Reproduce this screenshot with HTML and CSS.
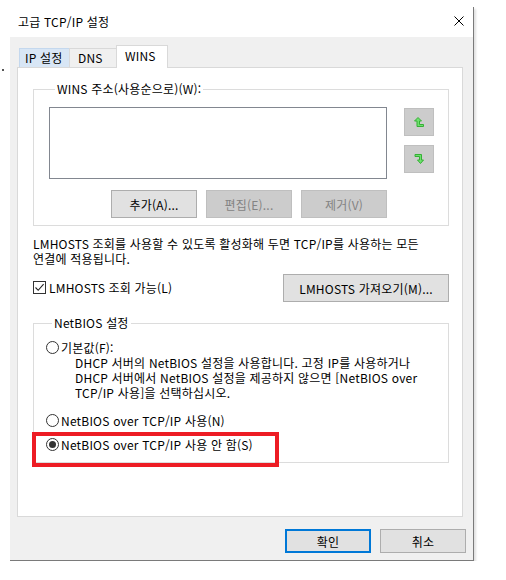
FILE: index.html
```html
<!DOCTYPE html>
<html lang="ko">
<head>
<meta charset="utf-8">
<title>고급 TCP/IP 설정</title>
<link rel="stylesheet" href="styles.css">
</head>
<body>
<div class="speck"></div>
<div class="dialog">
  <div class="titlebar">
    <span class="title">고급 TCP/IP 설정</span>
    <svg class="close" width="10" height="10" viewBox="0 0 10 10"><path d="M0.5 0.5 L9.5 9.5 M9.5 0.5 L0.5 9.5" stroke="#000" stroke-width="1" fill="none"/></svg>
  </div>
  <div class="body">
    <div class="tabs">
      <div class="tab tab-ip">IP 설정</div>
      <div class="tab tab-dns">DNS</div>
      <div class="tab tab-wins active">WINS</div>
    </div>
    <div class="panel">
      <fieldset class="group wins-group">
        <legend>WINS 주소(사용순으로)(W):</legend>
        <div class="list-row">
          <div class="listbox"></div>
          <div class="order-btns">
            <div class="btn-sq">
              <svg width="11" height="11" viewBox="0 0 11 11"><path d="M4 0.5 L7.5 4 L5.5 4 L5.5 7.5 L9.5 7.5 L9.5 9.5 L3 9.5 L3 4 L0.5 4 Z" fill="#6ee06e" stroke="#35b035" stroke-width="1" stroke-linejoin="miter"/></svg>
            </div>
            <div class="btn-sq">
              <svg width="11" height="11" viewBox="0 0 11 11"><path d="M1 0.5 L7.5 0.5 L7.5 6 L9.5 6 L6.5 9.5 L3.5 6 L5.5 6 L5.5 2.5 L1 2.5 Z" fill="#6ee06e" stroke="#35b035" stroke-width="1" stroke-linejoin="miter"/></svg>
            </div>
          </div>
        </div>
        <div class="btn-row">
          <div class="btn">추가(A)...</div>
          <div class="btn disabled">편집(E)...</div>
          <div class="btn disabled">제거(V)</div>
        </div>
      </fieldset>
      <p class="info">LMHOSTS 조회를 사용할 수 있도록 활성화해 두면 TCP/IP를 사용하는 모든<br>연결에 적용됩니다.</p>
      <div class="lm-row">
        <label class="check-line">
          <span class="checkbox">
            <svg width="11" height="11" viewBox="0 0 11 11"><path d="M1.5 5.5 L4.2 8.3 L9.6 2.2" stroke="#222" stroke-width="1.1" fill="none"/></svg>
          </span>
          <span>LMHOSTS 조회 가능(L)</span>
        </label>
        <div class="btn btn-wide">LMHOSTS 가져오기(M)...</div>
      </div>
      <fieldset class="group netbios-group">
        <legend>NetBIOS 설정</legend>
        <div class="radio-line">
          <span class="radio"></span><span>기본값(F):</span>
        </div>
        <p class="desc">DHCP 서버의 NetBIOS 설정을 사용합니다. 고정 IP를 사용하거나<br>DHCP 서버에서 NetBIOS 설정을 제공하지 않으면 [NetBIOS over<br>TCP/IP 사용]을 선택하십시오.</p>
        <div class="radio-line r2">
          <span class="radio"></span><span>NetBIOS over TCP/IP 사용(N)</span>
        </div>
        <div class="radio-line r3">
          <span class="radio checked"></span><span>NetBIOS over TCP/IP 사용 안 함(S)</span>
          <div class="highlight"></div>
        </div>
      </fieldset>
    </div>
    <div class="footer">
      <div class="btn btn-ok">확인</div>
      <div class="btn">취소</div>
    </div>
  </div>
</div>
</body>
</html>
```

FILE: styles.css
```css
* { box-sizing: border-box; }
html, body { margin: 0; padding: 0; background: #fff; }
body {
  font-family: "Noto Sans CJK KR", "Noto Sans", sans-serif;
  font-size: 12px;
  line-height: 15px;
  letter-spacing: 0.2px;
  color: #000;
  position: relative;
}
.speck {
  position: absolute; left: 2px; top: 69px; width: 2px; height: 2px; background: #555;
}
.dialog {
  margin: 7px 0 0 10px;
  width: 464px;
  border-right: 1px solid #7a7a7a;
  border-bottom: 1px solid #7a7a7a;
  box-shadow: 2px 2px 2px rgba(0,0,0,0.12);
}
.titlebar {
  height: 30px;
  background: #fff;
  display: flex;
  align-items: center;
  justify-content: space-between;
  padding: 0 9px 0 8px;
}
.title { line-height: 15px; margin-top: -1px; }
.close { display: block; margin-top: -2px; }
.body {
  background: #f0f0f0;
  padding: 8px 0 7px 7px;
}
.tabs {
  display: flex;
  align-items: flex-end;
  height: 22px;
  padding-left: 2px;
  position: relative;
  z-index: 1;
}
.tab {
  height: 19px;
  line-height: 17px;
  border: 1px solid #d9d9d9;
  border-bottom: none;
  background: #f0f0f0;
  white-space: nowrap;
}
.tab-ip { width: 50px; padding-left: 5px; background: #d8e6f5; border-color: #c4d8ee; border-right: none; }
.tab-dns { width: 47px; padding-left: 8px; border-left: 1px solid #d9d9d9; border-right: none; }
.tab-wins {
  width: 52px;
  height: 23px;
  margin-bottom: -1px;
  padding-left: 8px;
  background: #fff;
  line-height: 19px;
}
.panel {
  width: 446px;
  height: 450px;
  background: #fff;
  border: 1px solid #d9d9d9;
  padding: 14px 13px 0 15px;
}
.group {
  margin: 0;
  border: 1px solid #dcdcdc;
  min-width: 0;
}
.group legend {
  padding: 0 2px;
  margin-left: 6px;
  line-height: 14px;
  height: 14px;
  color: #000;
}
.wins-group { padding: 11px 14px 7px 15px; height: 144px; }
.list-row { display: flex; }
.listbox {
  width: 338px;
  height: 72px;
  border: 1px solid #828790;
  background: #fff;
}
.order-btns {
  margin-left: 17px;
  margin-top: 1px;
  display: flex;
  flex-direction: column;
  gap: 9px;
}
.btn-sq {
  width: 30px;
  height: 28px;
  background: #cccccc;
  border: 1px solid #bfbfbf;
  display: flex;
  align-items: center;
  justify-content: center;
}
.btn-sq svg { display: block; }
.btn-row {
  width: 338px;
  display: flex;
  justify-content: flex-end;
  gap: 9px;
  margin-top: 11px;
}
.btn {
  width: 86px;
  height: 28px;
  background: #e1e1e1;
  border: 1px solid #adadad;
  display: flex;
  align-items: center;
  justify-content: center;
  white-space: nowrap;
}
.btn.disabled { background: #cccccc; border-color: #bfbfbf; color: #838383; }
.info { margin: 10px 0 0 0; }
.lm-row {
  margin-top: 8px;
  width: 416px;
  display: flex;
  align-items: center;
  justify-content: space-between;
}
.check-line { display: flex; align-items: center; gap: 3px; margin-top: -1px; }
.checkbox {
  width: 13px; height: 13px;
  border: 1px solid #333;
  background: #fff;
  display: flex; align-items: center; justify-content: center;
}
.checkbox svg { display: block; }
.btn-wide { width: 166px; }
.netbios-group { margin-top: 14px; padding: 10px 12px 11px 12px; height: 147px; }
.radio-line { display: flex; align-items: center; gap: 2px; height: 15px; position: relative; }
.radio {
  width: 13px; height: 13px;
  border: 1px solid #333;
  border-radius: 50%;
  background: #fff;
  display: flex; align-items: center; justify-content: center;
}
.radio.checked::after {
  content: "";
  width: 7px; height: 7px;
  border-radius: 50%;
  background: #333;
}
.desc { margin: 0 0 0 29px; }
.r2 { margin-top: 13px; }
.r3 { margin-top: 9px; }
.highlight {
  position: absolute;
  left: -14px;
  top: -5px;
  width: 247px;
  height: 35px;
  border: 4px solid #ed1c24;
}
.footer {
  display: flex;
  justify-content: flex-end;
  gap: 9px;
  padding-right: 7px;
  margin-top: 12px;
}
.footer .btn { height: 24px; }
.btn-ok { border: 2px solid #0078d7; }
```
